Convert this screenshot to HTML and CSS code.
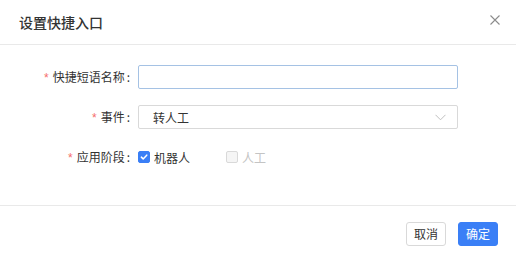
FILE: index.html
```html
<!DOCTYPE html>
<html lang="zh-CN">
<head>
<meta charset="utf-8">
<title>设置快捷入口</title>
<link rel="stylesheet" href="styles.css">
</head>
<body>
<div class="dialog">
  <div class="dialog-header">
    <span class="dialog-title">设置快捷入口</span>
    <span class="dialog-close">
      <svg width="10" height="10" viewBox="0 0 10 10"><path d="M0.5 0.5L9.5 9.5M9.5 0.5L0.5 9.5" stroke="#8c8c8c" stroke-width="1.1" fill="none"/></svg>
    </span>
  </div>
  <div class="dialog-body">
    <div class="form-row">
      <label class="form-label"><span class="req">*</span>快捷短语名称</label>
      <div class="form-control"><input class="text-input" type="text"></div>
    </div>
    <div class="form-row">
      <label class="form-label"><span class="req">*</span>事件</label>
      <div class="form-control">
        <div class="select">
          <span class="select-value">转人工</span>
          <svg class="select-arrow" width="11" height="7" viewBox="0 0 11 7"><path d="M0.5 0.8L5.5 5.8L10.5 0.8" stroke="#bfbfbf" stroke-width="1" fill="none"/></svg>
        </div>
      </div>
    </div>
    <div class="form-row">
      <label class="form-label"><span class="req">*</span>应用阶段</label>
      <div class="form-control checks">
        <span class="check-item">
          <span class="checkbox checked">
            <svg width="12" height="12" viewBox="0 0 12 12"><path d="M2.8 6.2L5 8.3L9.3 3.8" stroke="#fff" stroke-width="1.8" fill="none" stroke-linecap="round" stroke-linejoin="round"/></svg>
          </span>
          <span class="check-label">机器人</span>
        </span>
        <span class="check-item disabled">
          <span class="checkbox"></span>
          <span class="check-label">人工</span>
        </span>
      </div>
    </div>
  </div>
  <div class="dialog-footer">
    <button class="btn">取消</button>
    <button class="btn btn-primary">确定</button>
  </div>
</div>
</body>
</html>
```
FILE: styles.css
```css
html, body {
  margin: 0;
  padding: 0;
  background: #fff;
}
body {
  font-family: "Noto Sans CJK SC", "Noto Sans", sans-serif;
  font-size: 12px;
  color: #333;
}
.dialog {
  width: 516px;
  height: 262px;
  background: #fff;
}
.dialog-header {
  height: 44px;
  border-bottom: 1px solid #e9e9e9;
  display: flex;
  align-items: center;
  justify-content: space-between;
  padding: 0 16px 0 19px;
}
.dialog-title {
  font-size: 14px;
  font-weight: 500;
  color: #333;
  line-height: 20px;
  margin-top: 0;
}
.dialog-close {
  display: flex;
  width: 10px;
  height: 10px;
  margin-top: -5px;
}
.dialog-body {
  padding: 20px 0 36px;
  display: flex;
  flex-direction: column;
  gap: 16px;
}
.form-row {
  display: flex;
  align-items: center;
  height: 24px;
}
.form-label {
  width: 138px;
  flex: none;
  text-align: right;
  color: #333;
  font-size: 12px;
  line-height: 24px;
}
.form-label::after {
  content: ":";
  margin: 0 8px 0 2px;
}
.req {
  color: #f56c6c;
  margin-right: 4px;
  font-family: "Liberation Sans", sans-serif;
}
.form-control {
  width: 320px;
  display: flex;
  align-items: center;
}
.text-input {
  box-sizing: border-box;
  width: 320px;
  height: 24px;
  border: 1px solid #a5c2e4;
  border-radius: 2px;
  outline: none;
  padding: 0 8px;
  margin: 0;
  font-family: inherit;
  font-size: 12px;
}
.select {
  box-sizing: border-box;
  width: 320px;
  height: 24px;
  border: 1px solid #d9d9d9;
  border-radius: 2px;
  display: flex;
  align-items: center;
  justify-content: space-between;
  padding: 0 11px 0 14px;
}
.select-value {
  color: #333;
  font-size: 12px;
}
.select-arrow {
  display: block;
}
.checks {
  gap: 0;
}
.check-item {
  display: flex;
  align-items: center;
  gap: 4px;
  margin-right: 36px;
}
.checkbox {
  box-sizing: border-box;
  width: 12px;
  height: 12px;
  border: 1px solid #d9d9d9;
  border-radius: 2px;
  background: #f5f5f5;
  display: flex;
  align-items: center;
  justify-content: center;
}
.checkbox.checked {
  background: #3a7ff6;
  border-color: #3a7ff6;
}
.checkbox svg {
  display: block;
}
.check-label {
  color: #333;
  font-size: 12px;
}
.disabled .check-label {
  color: #c4c4c4;
}
.dialog-footer {
  border-top: 1px solid #e9e9e9;
  display: flex;
  justify-content: flex-end;
  gap: 12px;
  padding: 16px 18px 0 0;
}
.btn {
  box-sizing: border-box;
  width: 40px;
  height: 24px;
  padding: 0;
  border: 1px solid #d9d9d9;
  border-radius: 3px;
  background: #fff;
  color: #333;
  font-family: inherit;
  font-size: 12px;
  line-height: 22px;
}
.btn-primary {
  background: #3a7ff6;
  border-color: #3a7ff6;
  color: #fff;
}
```
